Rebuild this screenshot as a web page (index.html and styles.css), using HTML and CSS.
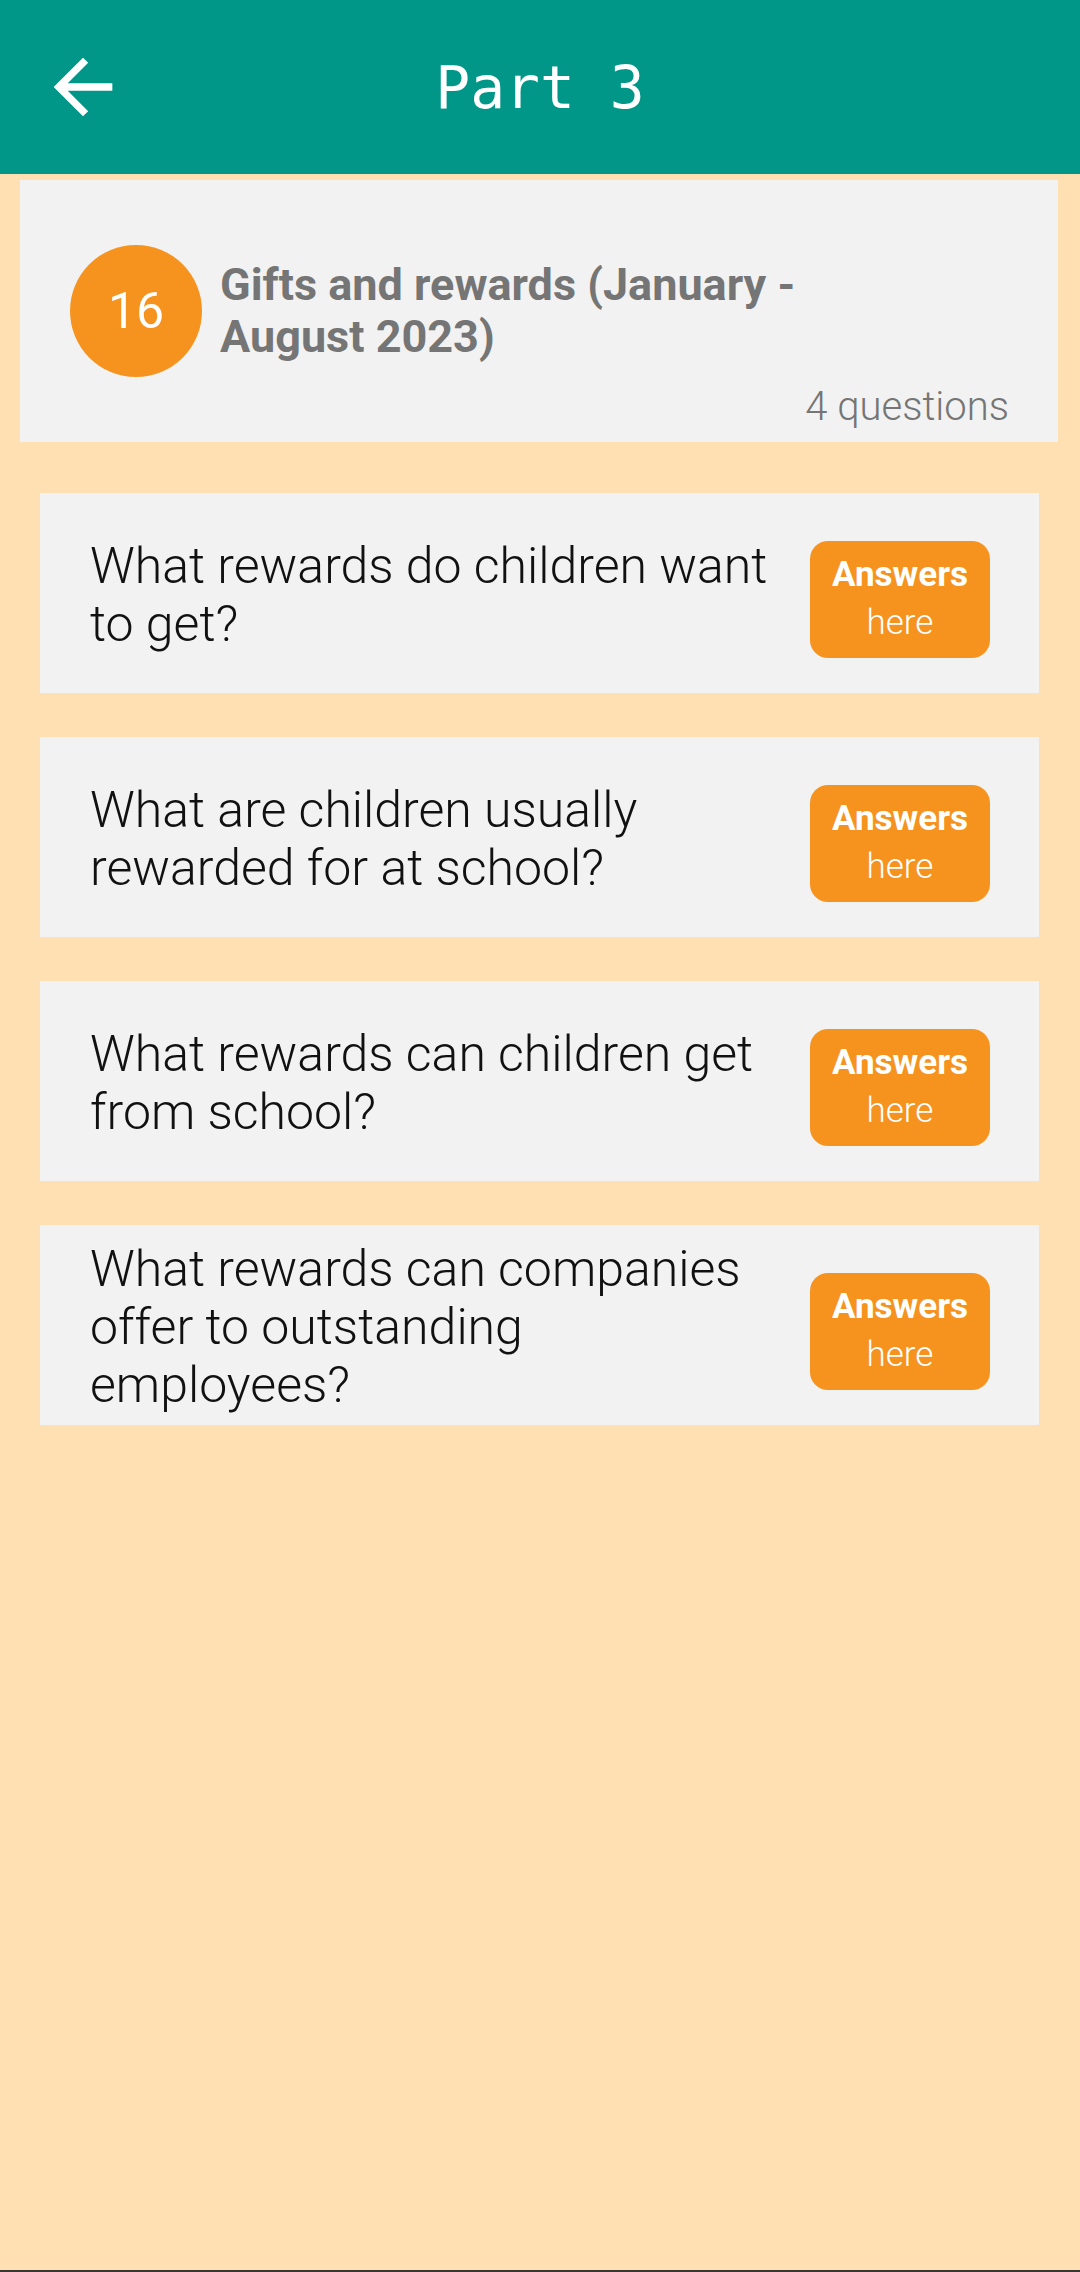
FILE: index.html
```html
<!DOCTYPE html>
<html lang="en">
<head>
<meta charset="utf-8">
<title>Part 3</title>
<link rel="stylesheet" href="styles.css">
</head>
<body>
<div class="screen">
  <header class="appbar">
    <div class="appbar-left">
      <svg class="back-icon" viewBox="0 0 24 24" aria-hidden="true">
        <path d="M20 11H7.83l5.59-5.59L12 4l-8 8 8 8 1.41-1.41L7.83 13H20v-2z" fill="#ffffff"/>
      </svg>
    </div>
    <h1 class="appbar-title">Part 3</h1>
    <div class="appbar-right"></div>
  </header>

  <main class="content">
    <section class="topic-card">
      <div class="topic-row">
        <div class="topic-badge">16</div>
        <h2 class="topic-title">Gifts and rewards (January - August 2023)</h2>
      </div>
      <div class="topic-count">4 questions</div>
    </section>

    <ul class="questions">
      <li class="question-card">
        <p class="question-text">What rewards do children want to get?</p>
        <a class="answers-btn"><span class="answers-strong">Answers</span><span class="answers-light">here</span></a>
      </li>
      <li class="question-card">
        <p class="question-text">What are children usually rewarded for at school?</p>
        <a class="answers-btn"><span class="answers-strong">Answers</span><span class="answers-light">here</span></a>
      </li>
      <li class="question-card">
        <p class="question-text">What rewards can children get from school?</p>
        <a class="answers-btn"><span class="answers-strong">Answers</span><span class="answers-light">here</span></a>
      </li>
      <li class="question-card">
        <p class="question-text">What rewards can companies offer to outstanding employees?</p>
        <a class="answers-btn"><span class="answers-strong">Answers</span><span class="answers-light">here</span></a>
      </li>
    </ul>
  </main>
  <div class="nav-edge"></div>
</div>
</body>
</html>
```

FILE: styles.css
```css
* { box-sizing: border-box; }

html, body {
  margin: 0;
  padding: 0;
  background: #FFE0B2;
  font-family: Roboto, "Noto Sans", "Liberation Sans", sans-serif;
}

.screen {
  min-height: 2272px;
  display: flex;
  flex-direction: column;
}

.appbar {
  height: 174px;
  background: #009688;
  display: grid;
  grid-template-columns: 1fr auto 1fr;
  align-items: center;
}

.appbar-left {
  display: flex;
  align-items: center;
  padding-left: 39px;
}

.back-icon {
  width: 88px;
  height: 88px;
  display: block;
}

.appbar-title {
  margin: 2px 0 0 0;
  font-family: "DejaVu Sans Mono", "Liberation Mono", monospace;
  font-weight: normal;
  font-size: 58px;
  color: #ffffff;
  letter-spacing: 0;
}

.content {
  flex: 1;
}

.topic-card {
  margin: 6px 22px 0 20px;
  background: #F2F2F2;
  padding: 65px 49px 12px 50px;
}

.topic-row {
  display: flex;
  align-items: center;
  gap: 18px;
}

.topic-badge {
  width: 132px;
  height: 132px;
  flex: none;
  border-radius: 50%;
  background: #F6931F;
  color: #ffffff;
  font-size: 50px;
  font-weight: 400;
  display: flex;
  align-items: center;
  justify-content: center;
}

.topic-title {
  margin: 0;
  max-width: 660px;
  font-size: 45px;
  line-height: 52px;
  font-weight: 700;
  color: #757575;
}

.topic-count {
  margin-top: 7px;
  text-align: right;
  font-size: 40px;
  line-height: 46px;
  font-weight: 300;
  color: #757575;
}

.questions {
  list-style: none;
  margin: 51px 41px 0 40px;
  padding: 0;
  display: flex;
  flex-direction: column;
  gap: 44px;
}

.question-card {
  height: 200px;
  background: #F2F2F2;
  display: flex;
  align-items: center;
  padding: 0 49px 0 50px;
  gap: 32px;
}

.question-text {
  flex: 1;
  margin: 0;
  padding-top: 4px;
  font-size: 50px;
  line-height: 58px;
  font-weight: 300;
  color: #111111;
}

.answers-btn {
  flex: none;
  width: 180px;
  height: 117px;
  margin-top: 12px;
  border-radius: 18px;
  background: #F6931F;
  color: #ffffff;
  display: flex;
  flex-direction: column;
  align-items: center;
  justify-content: center;
}

.answers-strong {
  font-size: 35px;
  line-height: 48px;
  font-weight: 700;
}

.answers-light {
  font-size: 35px;
  line-height: 48px;
  font-weight: 300;
}

.nav-edge {
  height: 2px;
  background: #3b3630;
}
```
